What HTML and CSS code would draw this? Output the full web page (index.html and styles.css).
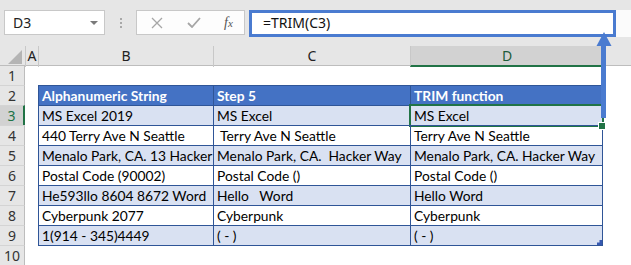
FILE: index.html
```html
<!DOCTYPE html>
<html lang="en">
<head>
  <meta charset="UTF-8">
  <title>TRIM function</title>
  <link rel="stylesheet" href="styles.css">
</head>
<body>
  <div class="app">
    <div class="toolbar">
      <div class="namebox">
        <span>D3</span>
        <svg class="caret" width="8" height="5" viewBox="0 0 8 5"><polygon points="0,0 8,0 4,4" fill="#7a7a7a"/></svg>
      </div>
      <div class="grip"><i></i><i></i><i></i></div>
      <div class="fbuttons">
        <svg width="12" height="12" viewBox="0 0 12 12"><path d="M1 1 L11 11 M11 1 L1 11" stroke="#a6a6a6" stroke-width="1.3" fill="none"/></svg>
        <svg width="14" height="11" viewBox="0 0 14 11"><path d="M1 6 L5 10 L13 1" stroke="#a6a6a6" stroke-width="1.8" fill="none"/></svg>
        <span class="fx"><i>f</i><i class="x">x</i></span>
      </div>
      <div class="formula">
        <div class="callout">=TRIM(C3)</div>
      </div>
    </div>

    <div class="sheet">
      <div class="row heads">
        <div class="corner"><svg width="14" height="14" viewBox="0 0 14 14"><polygon points="14,0 14,14 0,14" fill="#b4b4b4"/></svg></div>
        <div class="ch">A</div>
        <div class="ch">B</div>
        <div class="ch">C</div>
        <div class="ch on">D</div>
        <div class="ch"></div>
      </div>
      <div class="row r1">
        <div class="rh first">1</div><div></div><div></div><div></div><div></div><div></div>
      </div>
      <div class="row">
        <div class="rh">2</div><div></div>
        <div class="c t th">Alphanumeric String</div>
        <div class="c t th">Step 5</div>
        <div class="c t th last">TRIM function</div><div></div>
      </div>
      <div class="row">
        <div class="rh on">3</div><div></div>
        <div class="c t band">MS Excel 2019</div>
        <div class="c t band">MS Excel</div>
        <div class="c t band last sel">MS Excel</div><div></div>
      </div>
      <div class="row">
        <div class="rh">4</div><div></div>
        <div class="c t">440 Terry Ave N Seattle</div>
        <div class="c t"> Terry Ave N Seattle</div>
        <div class="c t last">Terry Ave N Seattle</div><div></div>
      </div>
      <div class="row">
        <div class="rh">5</div><div></div>
        <div class="c t band">Menalo Park, CA. 13 Hacker Way</div>
        <div class="c t band">Menalo Park, CA.  Hacker Way</div>
        <div class="c t band last">Menalo Park, CA. Hacker Way</div><div></div>
      </div>
      <div class="row">
        <div class="rh">6</div><div></div>
        <div class="c t">Postal Code (90002)</div>
        <div class="c t">Postal Code ()</div>
        <div class="c t last">Postal Code ()</div><div></div>
      </div>
      <div class="row">
        <div class="rh">7</div><div></div>
        <div class="c t band">He593llo 8604 8672 Word</div>
        <div class="c t band">Hello   Word</div>
        <div class="c t band last">Hello Word</div><div></div>
      </div>
      <div class="row">
        <div class="rh">8</div><div></div>
        <div class="c t">Cyberpunk 2077</div>
        <div class="c t">Cyberpunk</div>
        <div class="c t last">Cyberpunk</div><div></div>
      </div>
      <div class="row">
        <div class="rh">9</div><div></div>
        <div class="c t band">1(914 - 345)4449</div>
        <div class="c t band">( - )</div>
        <div class="c t band last grip-end">( - )</div><div></div>
      </div>
      <div class="row">
        <div class="rh">10</div><div></div>
        <div class="cap"></div><div class="cap"></div><div class="cap"></div><div></div>
      </div>
    </div>

    <svg class="arrow" width="18" height="90" viewBox="0 0 18 90">
      <rect x="6" y="13" width="5" height="75" fill="#4a7bd0"/>
      <polygon points="1.5,16 9,2 16.5,16" fill="#4a7bd0"/>
    </svg>
  </div>
</body>
</html>
```

FILE: styles.css
```css
:root {
  --ui-bg: #e6e6e6;
  --ui-line: #c8c8c8;
  --head-line: #bdbdbd;
  --tbl-line: #2f5597;
  --tbl-head: #4472c4;
  --tbl-band: #d9e1f2;
  --excel-green: #217346;
  --callout: #4a7bd0;
}
* { box-sizing: border-box; }
body {
  margin: 0;
  width: 631px;
  height: 265px;
  overflow: hidden;
  background: #fff;
}
.app {
  position: relative;
  width: 631px;
  height: 265px;
  font-family: "Noto Sans", "Open Sans", sans-serif;
}

/* Formula bar */
.toolbar {
  display: flex;
  align-items: flex-start;
  height: 46px;
  padding: 10px 0 0 4px;
  background: var(--ui-bg);
}
.namebox {
  display: flex;
  align-items: center;
  justify-content: space-between;
  width: 101px;
  height: 25px;
  padding: 0 6px 0 8px;
  background: #fff;
  border: 1px solid var(--ui-line);
  font-size: 14px;
  color: #222;
}
.caret { margin-top: 1px; }
.grip {
  display: flex;
  flex-direction: column;
  align-items: center;
  gap: 2px;
  width: 31px;
  padding-top: 8px;
}
.grip i { width: 2px; height: 2px; background: #a8a8a8; }
.fbuttons {
  display: flex;
  align-items: center;
  width: 109px;
  height: 25px;
  padding-left: 14px;
  gap: 21px;
  background: #fdfdfd;
  border: 1px solid var(--ui-line);
}
.fbuttons svg:nth-child(2) { margin-left: 3px; }
.fx {
  margin-left: 2px;
  font-family: "Liberation Serif", serif;
  font-size: 14px;
  color: #555;
}
.fx .x { font-size: 11px; }
.formula {
  flex: 1;
  height: 27px;
  margin-left: 4px;
  background: #fbfbfb;
}
.callout {
  width: 367px;
  height: 27px;
  padding-left: 11px;
  border: 3px solid var(--callout);
  background: #fff;
  font-size: 14px;
  line-height: 20px;
  color: #111;
}

/* Sheet grid */
.row {
  display: grid;
  grid-template-columns: 25px 13px 175px 197px 193px 1fr;
  height: 20px;
}
.row.r1 { height: 19px; }
.heads {
  background: var(--ui-bg);
  border-bottom: 1px solid var(--head-line);
}
.corner {
  display: flex;
  align-items: flex-end;
  justify-content: flex-end;
  padding: 0 3px 3px 0;
}
.ch {
  border-left: 1px solid var(--ui-line);
  text-align: center;
  font-size: 14px;
  line-height: 19px;
  color: #222;
}
.ch.on {
  background: #d2d2d2;
  border-bottom: 2px solid var(--excel-green);
  color: #1e5c3a;
}
.rh {
  background: var(--ui-bg);
  border-top: 1px solid #d4d4d4;
  border-right: 1px solid var(--head-line);
  text-align: center;
  font-size: 14px;
  line-height: 19px;
  color: #333;
}
.rh.first { border-top: none; }
.rh.on {
  background: #d2d2d2;
  border-right: 2px solid var(--excel-green);
  color: var(--excel-green);
}

/* Table cells */
.c {
  position: relative;
  padding-left: 3px;
  white-space: pre;
  overflow: hidden;
  font-family: Lato, "Liberation Sans", sans-serif;
  font-size: 13.8px;
  line-height: 19px;
  color: #000;
}
.t {
  border-top: 1px solid var(--tbl-line);
  border-left: 1px solid var(--tbl-line);
}
.t.last { border-right: 1px solid var(--tbl-line); overflow: visible; }
.th {
  background: var(--tbl-head);
  color: #fff;
  font-weight: 700;
}
.band { background: var(--tbl-band); }
.cap { border-top: 1px solid var(--tbl-line); }

.sel::after {
  content: '';
  position: absolute;
  left: -2px;
  top: -2px;
  right: -2px;
  bottom: -2px;
  border: 2px solid var(--excel-green);
}
.sel::before {
  content: '';
  position: absolute;
  right: -4px;
  bottom: -5px;
  width: 6px;
  height: 6px;
  background: var(--excel-green);
  border: 1px solid #fff;
  z-index: 1;
}
.grip-end::after {
  content: '';
  position: absolute;
  right: 0;
  bottom: 0;
  width: 5px;
  height: 5px;
  background: #3658b0;
  clip-path: polygon(100% 0, 100% 100%, 0 100%, 0 50%, 50% 50%, 50% 0);
}

.arrow {
  position: absolute;
  left: 595px;
  top: 30px;
  z-index: 2;
}
```
